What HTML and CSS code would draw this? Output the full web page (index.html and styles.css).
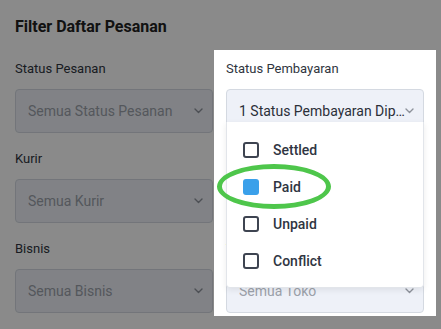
FILE: index.html
```html
<!DOCTYPE html>
<html lang="id">
<head>
    <meta charset="UTF-8">
    <meta name="viewport" content="width=device-width, initial-scale=1.0">
    <title>Filter Daftar Pesanan</title>
    <link rel="stylesheet" href="styles.css">
</head>
<body>
    <div class="page">
        <h1 class="title">Filter Daftar Pesanan</h1>

        <div class="filter-grid">
            <div class="field">
                <label class="field-label">Status Pesanan</label>
                <div class="select placeholder">
                    <span class="select-text">Semua Status Pesanan</span>
                    <svg class="chevron" width="9" height="6" viewBox="0 0 9 6"><path d="M1 1l3.5 3.5L8 1" fill="none" stroke="currentColor" stroke-width="1.4" stroke-linecap="round" stroke-linejoin="round"/></svg>
                </div>
            </div>
            <div class="field">
                <label class="field-label">Status Pembayaran</label>
                <div class="select">
                    <span class="select-text">1 Status Pembayaran Dipilih</span>
                    <svg class="chevron" width="9" height="6" viewBox="0 0 9 6"><path d="M1 1l3.5 3.5L8 1" fill="none" stroke="currentColor" stroke-width="1.4" stroke-linecap="round" stroke-linejoin="round"/></svg>
                </div>
            </div>

            <div class="field">
                <label class="field-label">Kurir</label>
                <div class="select placeholder">
                    <span class="select-text">Semua Kurir</span>
                    <svg class="chevron" width="9" height="6" viewBox="0 0 9 6"><path d="M1 1l3.5 3.5L8 1" fill="none" stroke="currentColor" stroke-width="1.4" stroke-linecap="round" stroke-linejoin="round"/></svg>
                </div>
            </div>
            <div class="field">
                <label class="field-label">Gudang</label>
                <div class="select placeholder">
                    <span class="select-text">Semua Gudang</span>
                    <svg class="chevron" width="9" height="6" viewBox="0 0 9 6"><path d="M1 1l3.5 3.5L8 1" fill="none" stroke="currentColor" stroke-width="1.4" stroke-linecap="round" stroke-linejoin="round"/></svg>
                </div>
            </div>

            <div class="field">
                <label class="field-label">Bisnis</label>
                <div class="select placeholder">
                    <span class="select-text">Semua Bisnis</span>
                    <svg class="chevron" width="9" height="6" viewBox="0 0 9 6"><path d="M1 1l3.5 3.5L8 1" fill="none" stroke="currentColor" stroke-width="1.4" stroke-linecap="round" stroke-linejoin="round"/></svg>
                </div>
            </div>
            <div class="field">
                <label class="field-label">Toko</label>
                <div class="select placeholder">
                    <span class="select-text">Semua Toko</span>
                    <svg class="chevron" width="9" height="6" viewBox="0 0 9 6"><path d="M1 1l3.5 3.5L8 1" fill="none" stroke="currentColor" stroke-width="1.4" stroke-linecap="round" stroke-linejoin="round"/></svg>
                </div>
            </div>
        </div>
    </div>

    <!-- sorotan pada kolom status pembayaran -->
    <div class="spotlight"></div>

    <ul class="dropdown">
        <li class="option"><span class="checkbox"></span>Settled</li>
        <li class="option"><span class="checkbox checked"></span>Paid</li>
        <li class="option"><span class="checkbox"></span>Unpaid</li>
        <li class="option"><span class="checkbox"></span>Conflict</li>
    </ul>

    <div class="marker"></div>
</body>
</html>
```
FILE: styles.css
```css
body {
    margin: 0;
    font-family: Roboto, 'Noto Sans', sans-serif;
    background: #ffffff;
    color: #2b2f38;
    position: relative;
    width: 441px;
    height: 329px;
    overflow: hidden;
}
.page {
    padding: 17px 17px 0 15px;
}
.title {
    margin: 0;
    font-size: 16px;
    line-height: 20px;
    font-weight: 700;
    color: #222;
}
.filter-grid {
    display: grid;
    grid-template-columns: 198px 198px;
    column-gap: 13px;
    row-gap: 18px;
    margin-top: 24px;
}
.field-label {
    display: block;
    font-size: 13px;
    line-height: 16px;
    color: #2f3540;
    margin-bottom: 12px;
}
.select {
    height: 44px;
    box-sizing: border-box;
    border: 1px solid #d4d9e1;
    border-radius: 4px;
    background: #eef1f8;
    padding: 0 9px 0 12px;
    display: flex;
    align-items: center;
    font-size: 14px;
    color: #2b2f38;
}
.select.placeholder {
    color: #9ca1aa;
}
.select-text {
    flex: 1;
    white-space: nowrap;
    overflow: hidden;
    text-overflow: ellipsis;
}
.chevron {
    color: #8d929b;
    flex-shrink: 0;
}
.spotlight {
    position: absolute;
    left: 214px;
    top: 50px;
    width: 222px;
    height: 266px;
    box-shadow: 0 0 0 999px rgba(0, 0, 0, 0.46);
}
.dropdown {
    position: absolute;
    left: 226px;
    top: 122px;
    width: 198px;
    box-sizing: border-box;
    margin: 0;
    padding: 9px 0 8px;
    list-style: none;
    background: #fff;
    border: 1px solid #e2e5ea;
    border-top: none;
    border-radius: 0 0 4px 4px;
    box-shadow: 0 2px 6px rgba(0, 0, 0, 0.08);
}
.option {
    height: 37px;
    display: flex;
    align-items: center;
    gap: 14px;
    padding-left: 16px;
    font-size: 14px;
    font-weight: 500;
    color: #2f3542;
}
.checkbox {
    width: 16px;
    height: 16px;
    box-sizing: border-box;
    border: 2px solid #3e4451;
    border-radius: 3px;
}
.checkbox.checked {
    border: none;
    background: #3aa0ea;
}
.marker {
    position: absolute;
    left: 217px;
    top: 164px;
    width: 114px;
    height: 45px;
    box-sizing: border-box;
    border: 5px solid #4ec64b;
    border-radius: 50%;
}
```
